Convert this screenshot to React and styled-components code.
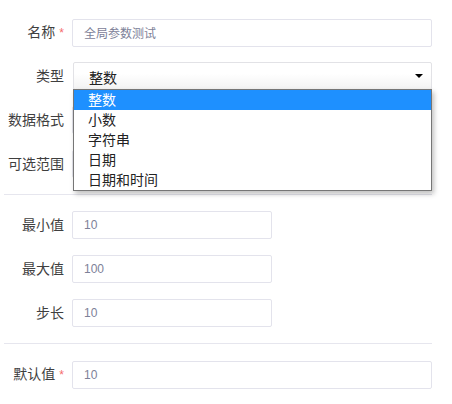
import React from 'react';
import styled, { createGlobalStyle } from 'styled-components';

const GlobalStyle = createGlobalStyle`
  body {
    margin: 0;
    background: #fff;
    font-family: "Helvetica Neue", "Liberation Sans", "Noto Sans CJK SC", sans-serif;
  }
`;

const TYPE_OPTIONS = ['整数', '小数', '字符串', '日期', '日期和时间'];

export default function App() {
  return (
    <Form>
      <GlobalStyle />
      <Row>
        <Label required>名称</Label>
        <Input defaultValue="全局参数测试" />
      </Row>

      <Row>
        <Label>类型</Label>
        <SelectWrap>
          <SelectBox>
            <span>整数</span>
            <Caret />
          </SelectBox>
          <Menu>
            {TYPE_OPTIONS.map((opt, i) => (
              <MenuItem key={opt} active={i === 0}>{opt}</MenuItem>
            ))}
          </Menu>
        </SelectWrap>
      </Row>

      <Row>
        <Label>数据格式</Label>
        <Input />
      </Row>

      <Row>
        <Label>可选范围</Label>
        <Input />
      </Row>

      <Divider />

      <Row>
        <Label>最小值</Label>
        <Input short defaultValue="10" />
      </Row>
      <Row>
        <Label>最大值</Label>
        <Input short defaultValue="100" />
      </Row>
      <Row>
        <Label>步长</Label>
        <Input short defaultValue="10" />
      </Row>

      <Divider />

      <Row>
        <Label required>默认值</Label>
        <Input defaultValue="10" />
      </Row>
    </Form>
  );
}

const Form = styled.div`
  width: 432px;
  padding-top: 18px;
`;

const Row = styled.div`
  display: grid;
  grid-template-columns: 64px 1fr;
  column-gap: 8px;
  align-items: center;
  height: 28px;
  margin-bottom: 16px;
`;

const Label = styled.label`
  text-align: right;
  font-size: 14px;
  line-height: 28px;
  color: #3f3f3f;
  white-space: nowrap;

  &::after {
    content: ${props => (props.required ? '"*"' : 'none')};
    margin-left: 4px;
    color: #f56c6c;
    font-size: 12px;
  }
`;

const Input = styled.input`
  box-sizing: border-box;
  width: ${props => (props.short ? '200px' : '100%')};
  height: 28px;
  padding: 0 11px;
  border: 1px solid #e3e3ec;
  border-radius: 2px;
  outline: none;
  font-family: "Liberation Sans", "Noto Sans CJK SC", sans-serif;
  font-size: 12px;
  color: #7d8198;
  background: #fff;
`;

const SelectWrap = styled.div`
  position: relative;
  margin-left: 1px;
`;

const SelectBox = styled.div`
  box-sizing: border-box;
  display: flex;
  align-items: center;
  justify-content: space-between;
  height: 28px;
  padding: 2px 8px 0 15px;
  border: 1px solid #e2e2e6;
  border-radius: 2px;
  background: linear-gradient(#ffffff 40%, #f3f3f3);
  font-size: 14px;
  color: #222;
`;

const Caret = styled.span`
  width: 0;
  height: 0;
  border-left: 4px solid transparent;
  border-right: 4px solid transparent;
  border-top: 4px solid #000;
  margin-top: -2px;
`;

const Menu = styled.ul`
  position: absolute;
  top: 27px;
  left: 0;
  right: 0;
  margin: 0;
  padding: 0;
  list-style: none;
  background: #fff;
  border: 1px solid #767676;
  box-shadow: 2px 3px 5px rgba(0, 0, 0, 0.25);
  z-index: 10;
`;

const MenuItem = styled.li`
  height: 20px;
  line-height: 20px;
  padding-left: 14px;
  font-size: 14px;
  color: ${props => (props.active ? '#fff' : '#222')};
  background: ${props => (props.active ? '#1e90ff' : 'transparent')};
`;

const Divider = styled.div`
  height: 1px;
  margin: 0 0 16px 4px;
  background: #e6e6ee;
`;
